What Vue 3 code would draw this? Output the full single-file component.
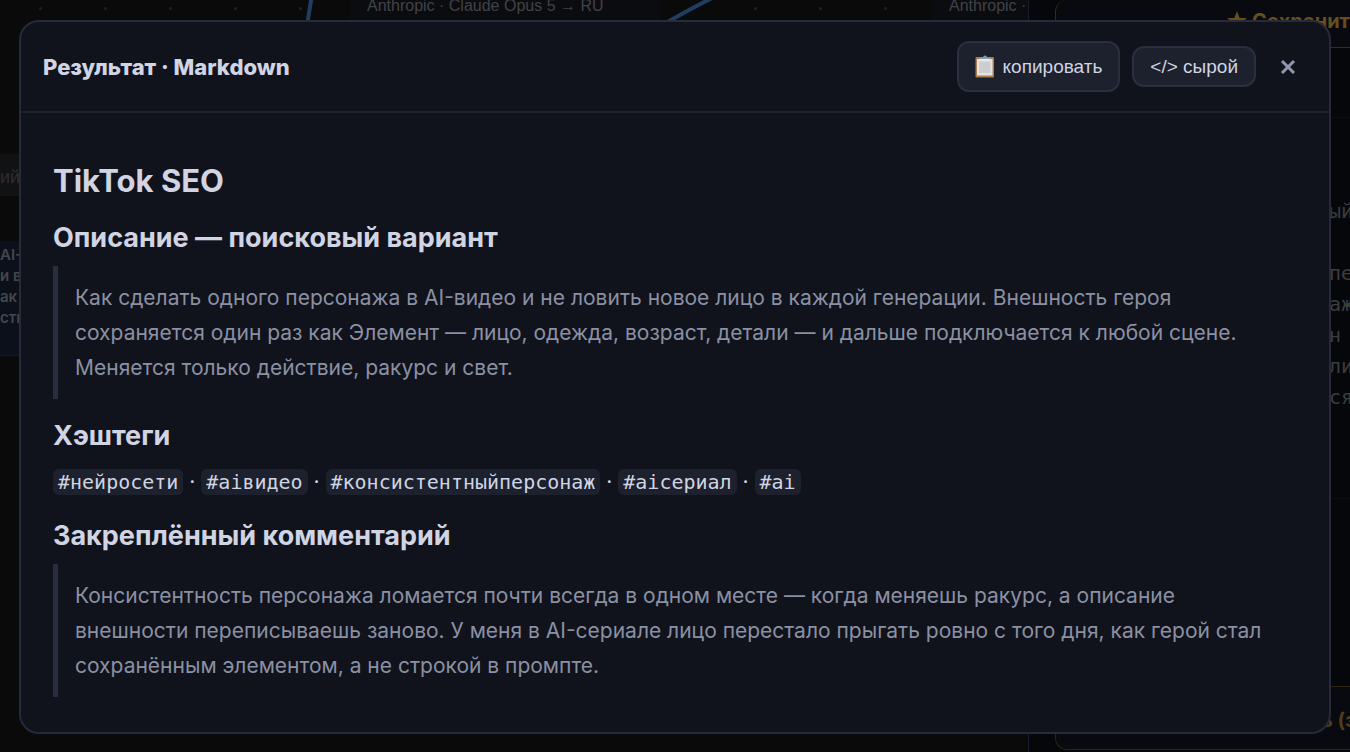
<script setup>
const hashtags = ['#нейросети', '#aiвидео', '#консистентныйперсонаж', '#aiсериал', '#ai']
const scriptLines = ['ый', '', 'пе', 'аж', 'н', 'ли', 'ся']
const noteLines = ['AI-', 'и в', 'ак З', 'ств']
</script>

<template>
  <div class="page">
    <div class="workspace" aria-hidden="true">
      <div class="canvas">
        <svg class="wires" width="1028" height="60" viewBox="0 0 1028 60" fill="none">
          <path d="M312 -6 L307 26" />
          <path d="M714 -3 Q692 8 664 24" />
        </svg>
        <div class="node node-main">Anthropic · Claude Opus 5 → RU</div>
        <div class="node node-next">Anthropic ·</div>
        <div class="node-tag">рий</div>
        <div class="note">
          <div v-for="line in noteLines" :key="line">{{ line }}</div>
        </div>
      </div>
      <aside class="side">
        <div class="save"><span class="save-label">
          <svg class="star" width="20" height="20" viewBox="0 0 20 20"><path d="M10 0l2.600 7H20l-6 4.500 2.300 7.500L10 14.600 3.700 19 6 11.500 0 7h7.400z" fill="currentColor" /></svg>
          Сохранить</span></div>
        <div class="script">
          <div v-for="(line, i) in scriptLines" :key="i">{{ line }}</div>
        </div>
        <div class="extra"><span>ь (з</span></div>
      </aside>
    </div>

    <div class="overlay">
      <section class="modal" role="dialog" aria-labelledby="dialog-title">
        <header class="head">
          <h1 id="dialog-title" class="title">Результат · Markdown</h1>
          <div class="actions">
            <button type="button" class="btn btn-copy">
              <svg class="clip" width="20" height="23" viewBox="0 0 20 23">
                <rect x="0.500" y="2" width="18.500" height="20.500" rx="1" fill="#a97c4c" />
                <rect x="2" y="4" width="15.500" height="16.500" fill="#e4e3e3" />
                <path d="M4 6.500h11.500v11.500H4z" fill="#cfcfd0" />
                <path d="M5 9h9.500M5 11.500h9.500M5 14h9.500" stroke="#c8c9ca" stroke-width="1" />
                <path d="M4 4V2.500h4q0-2 2-2T12 2.500h3.500V4z" fill="#8c98a5" />
                <path d="M5 4h9.500v1H5z" fill="#f2f2f2" />
              </svg>
              <span>копировать</span>
            </button>
            <button type="button" class="btn">&lt;/&gt; сырой</button>
            <button type="button" class="close" aria-label="Закрыть">
              <svg width="16" height="16" viewBox="0 0 16 16"><path d="M2 2L14 14M14 2L2 14" stroke="currentColor" stroke-width="3" /></svg>
            </button>
          </div>
        </header>

        <article class="body">
          <h2 class="doc-title">TikTok SEO</h2>
          <h3>Описание — поисковый вариант</h3>
          <blockquote>
            Как сделать одного персонажа в AI-видео и не ловить новое лицо в каждой генерации. Внешность героя сохраняется один раз как Элемент — лицо, одежда, возраст, детали — и дальше подключается к любой сцене. Меняется только действие, ракурс и свет.
          </blockquote>
          <h3>Хэштеги</h3>
          <p class="tags">
            <template v-for="(tag, i) in hashtags" :key="tag"><span v-if="i"> · </span><code>{{ tag }}</code></template>
          </p>
          <h3>Закреплённый комментарий</h3>
          <blockquote>
            Консистентность персонажа ломается почти всегда в одном месте — когда меняешь ракурс, а описание внешности переписываешь заново. У меня в AI-сериале лицо перестало прыгать ровно с того дня, как герой стал сохранённым элементом, а не строкой в промпте.
          </blockquote>
        </article>
      </section>
    </div>
  </div>
</template>

<style>
body {
  background: #0a0a0a;
}
</style>

<style scoped>
.page {
  position: relative;
  min-height: 100vh;
  overflow: hidden;
  font-family: Inter, "Noto Sans", sans-serif;
  color: #d0d4e3;
}

.page * {
  box-sizing: border-box;
}

.workspace {
  position: absolute;
  inset: 0;
  display: flex;
  overflow: hidden;
}

.canvas {
  position: relative;
  flex: 1;
  background-color: #0a0a0a;
  background-image: radial-gradient(circle, #1e1f21 1px, transparent 2px);
  background-size: 65px 65px;
  background-position: 8px -24px;
}

.wires {
  position: absolute;
  left: 0;
  top: 0;
  stroke: #213d61;
  stroke-width: 4;
}

.node {
  position: absolute;
  top: -20px;
  height: 60px;
  padding: 16px 17px;
  background: #0b0c10;
  color: #414247;
  font: 16px/20px "Liberation Sans", Arial, sans-serif;
  white-space: nowrap;
}

.node-main {
  left: 350px;
  width: 310px;
}

.node-next {
  left: 932px;
  right: 0;
}

.node-tag {
  position: absolute;
  top: 154px;
  left: -10px;
  width: 60px;
  height: 42px;
  background: #111214;
  color: #2d2e30;
  font: 18px/46px "Liberation Sans", Arial, sans-serif;
}

.note {
  position: absolute;
  top: 241px;
  left: 0;
  width: 80px;
  height: 115px;
  padding-top: 3px;
  background: #0b101a;
  border-bottom: 1px solid #111827;
  color: #45474c;
  font: 600 15px/21px Inter, sans-serif;
  white-space: nowrap;
}

.side {
  flex: none;
  display: flex;
  flex-direction: column;
  width: 322px;
  padding-left: 26px;
  background: #06070b;
  border-left: 1px solid #171d2c;
}

.save {
  flex: none;
  height: 48px;
  padding: 9px 0 0 171px;
  border: 1px solid #3a2d15;
  border-width: 0 0 1px 1px;
  border-radius: 12px 0 0 12px;
  background: #080a10;
  color: #654e1f;
  font: bold 20px/24px Inter, sans-serif;
  white-space: nowrap;
}

.save-label {
  display: flex;
  align-items: center;
  gap: 5px;
}

.star {
  flex: none;
}

.script {
  flex: none;
  height: 382px;
  margin-top: 69px;
  padding: 78px 0 0 274px;
  border-top: 1px solid #0d0e12;
  border-bottom: 1px solid #0d0e12;
  color: #3c3d40;
  font: 20px/31px "DejaVu Sans Mono", monospace;
  white-space: nowrap;
}

.script div {
  height: 31px;
}

.extra {
  height: 64px;
  margin-top: 187px;
  padding: 20px 0 0 265px;
  border: 1px solid #2d2412;
  border-right: 0;
  border-radius: 12px 0 0 12px;
  background: #080a10;
  color: #4f3e1c;
  font: bold 20px/26px Inter, sans-serif;
  white-space: nowrap;
}

.overlay {
  position: relative;
  padding: 20px 19px 18px;
}

.modal {
  overflow: hidden;
  border: 2px solid #262a39;
  border-radius: 20px;
  background: #10131b;
}

.head {
  display: flex;
  align-items: center;
  justify-content: space-between;
  gap: 24px;
  padding: 19px 22px;
  border-bottom: 2px solid #1e222d;
}

.title {
  margin: 0;
  font-size: 22px;
  font-weight: 800;
  line-height: 28px;
}

.actions {
  display: flex;
  align-items: center;
  gap: 12px;
}

.btn {
  display: flex;
  align-items: center;
  gap: 8px;
  padding: 8px 16px;
  border: 2px solid #292f3f;
  border-radius: 12px;
  background: #1c212d;
  color: #d0d4e3;
  font: 19px/21px "Liberation Sans", Arial, sans-serif;
}

.btn-copy {
  padding: 12px 16px;
}

.clip {
  flex: none;
}

.close {
  display: flex;
  align-items: center;
  justify-content: center;
  width: 39px;
  height: 39px;
  padding: 0;
  border: 0;
  background: none;
  color: #9297ab;
}

.body {
  padding: 48px 32px 35px;
  font-size: 21px;
  line-height: 35px;
}

.doc-title {
  margin: 0;
  font-size: 31px;
  font-weight: 700;
  line-height: 40px;
}

h3 {
  margin: 19px 0 11px;
  font-size: 27px;
  font-weight: 700;
  line-height: 35px;
}

blockquote {
  margin: 0;
  padding: 14px 14px 14px 17px;
  border-left: 5px solid #292e3f;
  color: #8b90a3;
}

.tags {
  margin: 0;
}

.tags span {
  white-space: pre;
}

code {
  padding: 1px 5px;
  border-radius: 6px;
  background: #1c212d;
  font: 20px/24px "DejaVu Sans Mono", monospace;
}
</style>
